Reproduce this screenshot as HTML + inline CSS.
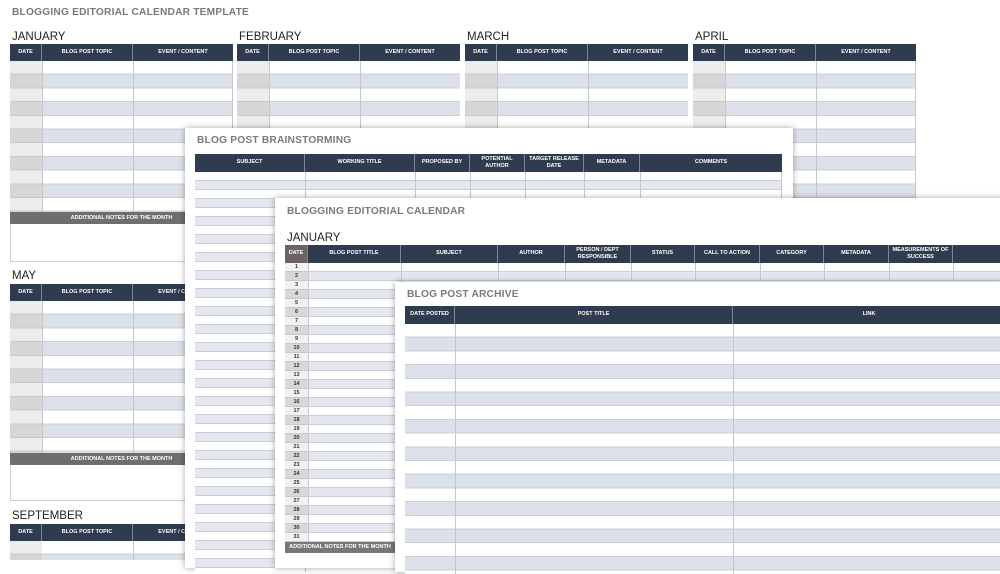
<!DOCTYPE html>
<html><head><meta charset="utf-8"><style>
*{margin:0;padding:0;box-sizing:border-box}
body{width:1000px;height:560px;overflow:hidden;background:#fff;position:relative;font-family:"Liberation Sans",sans-serif}
.a{position:absolute}
.ttl{position:absolute;color:#7a7a7a;font-weight:bold;font-size:10.2px;letter-spacing:.2px}
.mon{position:absolute;color:#222;font-size:11.5px}
.hd{position:absolute;background:#2f3b4e;display:flex;color:#fff;font-weight:bold;font-size:5.5px;text-align:center;align-items:stretch}
.hd div{display:flex;align-items:center;justify-content:center;border-right:1px solid #7d8797;line-height:1.35}
.hd div:last-child{border-right:none}
.rows{position:absolute;background:repeating-linear-gradient(#fff 0 12.7px,#c9ced6 12.7px 13.7px,#dce1e9 13.7px 26.4px,#c9ced6 26.4px 27.4px)}
.dc{position:absolute;background:repeating-linear-gradient(#ececec 0 12.7px,#c9c9c9 12.7px 13.7px,#d6d6d6 13.7px 26.4px,#c9c9c9 26.4px 27.4px)}
.vl{position:absolute;width:1px;background:#c4c8ce}
.nb{position:absolute;background:#6e6e6e;color:#fff;font-weight:bold;font-size:5.5px;text-align:center;line-height:12px}
.nbox{position:absolute;border:1px solid #d0d0d0;border-top:none}
.sheet{position:absolute;background:#fff;box-shadow:0 0 6px rgba(0,0,0,.35)}
.r9{position:absolute;background:repeating-linear-gradient(#fff 0 8px,#c9ced6 8px 9px,#e4e8ee 9px 17px,#c9ced6 17px 18px)}
.d9{position:absolute;background:repeating-linear-gradient(#f1f1f1 0 8px,#c9c9c9 8px 9px,#d8d8d8 9px 17px,#c9c9c9 17px 18px);font-size:5.5px;font-weight:bold;color:#333;text-align:center}
.d9 div{height:9px;line-height:9px}
</style></head><body>

<div class="ttl" style="left:12px;top:7px">BLOGGING EDITORIAL CALENDAR TEMPLATE</div>

<!-- Month tables -->
<div class="mon" style="left:12px;top:31px">JANUARY</div>
<div class="mon" style="left:239px;top:31px">FEBRUARY</div>
<div class="mon" style="left:467px;top:31px">MARCH</div>
<div class="mon" style="left:695px;top:31px">APRIL</div>

<div class="hd" style="left:10px;top:44px;width:223px;height:17px"><div style="width:32px">DATE</div><div style="width:91px">BLOG POST TOPIC</div><div style="flex:1">EVENT / CONTENT</div></div>
<div class="rows" style="left:10px;top:61px;width:223px;height:151px"></div><div class="dc" style="left:10px;top:61px;width:32px;height:151px"></div>
<div class="vl" style="left:133px;top:61px;height:151px"></div><div class="vl" style="left:232px;top:61px;height:151px"></div><div class="vl" style="left:42px;top:61px;height:151px"></div>
<div class="nb" style="left:10px;top:212px;width:223px;height:12px">ADDITIONAL NOTES FOR THE MONTH</div>
<div class="nbox" style="left:10px;top:224px;width:223px;height:38px"></div>

<div class="hd" style="left:237px;top:44px;width:223px;height:17px"><div style="width:32px">DATE</div><div style="width:91px">BLOG POST TOPIC</div><div style="flex:1">EVENT / CONTENT</div></div>
<div class="rows" style="left:237px;top:61px;width:223px;height:80px"></div><div class="dc" style="left:237px;top:61px;width:32px;height:80px"></div>
<div class="vl" style="left:360px;top:61px;height:80px"></div><div class="vl" style="left:269px;top:61px;height:80px"></div>

<div class="hd" style="left:465px;top:44px;width:223px;height:17px"><div style="width:32px">DATE</div><div style="width:91px">BLOG POST TOPIC</div><div style="flex:1">EVENT / CONTENT</div></div>
<div class="rows" style="left:465px;top:61px;width:223px;height:80px"></div><div class="dc" style="left:465px;top:61px;width:32px;height:80px"></div>
<div class="vl" style="left:588px;top:61px;height:80px"></div><div class="vl" style="left:497px;top:61px;height:80px"></div>

<div class="hd" style="left:693px;top:44px;width:223px;height:17px"><div style="width:32px">DATE</div><div style="width:91px">BLOG POST TOPIC</div><div style="flex:1">EVENT / CONTENT</div></div>
<div class="rows" style="left:693px;top:61px;width:223px;height:137px"></div><div class="dc" style="left:693px;top:61px;width:32px;height:137px"></div>
<div class="vl" style="left:816px;top:61px;height:137px"></div><div class="vl" style="left:725px;top:61px;height:137px"></div><div class="vl" style="left:915px;top:61px;height:137px"></div>

<div class="mon" style="left:12px;top:270px">MAY</div>
<div class="hd" style="left:10px;top:284px;width:223px;height:17px"><div style="width:32px">DATE</div><div style="width:91px">BLOG POST TOPIC</div><div style="flex:1">EVENT / CONTENT</div></div>
<div class="rows" style="left:10px;top:301px;width:223px;height:152px"></div><div class="dc" style="left:10px;top:301px;width:32px;height:152px"></div>
<div class="vl" style="left:133px;top:301px;height:152px"></div><div class="vl" style="left:42px;top:301px;height:152px"></div>
<div class="nb" style="left:10px;top:453px;width:223px;height:12px">ADDITIONAL NOTES FOR THE MONTH</div>
<div class="nbox" style="left:10px;top:465px;width:223px;height:36px"></div>

<div class="mon" style="left:12px;top:510px">SEPTEMBER</div>
<div class="hd" style="left:10px;top:524px;width:223px;height:17px"><div style="width:32px">DATE</div><div style="width:91px">BLOG POST TOPIC</div><div style="flex:1">EVENT / CONTENT</div></div>
<div class="rows" style="left:10px;top:541px;width:223px;height:19px"></div><div class="dc" style="left:10px;top:541px;width:32px;height:19px"></div>
<div class="vl" style="left:133px;top:541px;height:19px"></div>

<!-- Brainstorming sheet -->
<div class="sheet" style="left:185px;top:128px;width:608px;height:440px">
  <div class="ttl" style="left:12px;top:7px">BLOG POST BRAINSTORMING</div>
  <div class="hd" style="left:10px;top:26px;width:587px;height:18px"><div style="width:110px">SUBJECT</div><div style="width:110px">WORKING TITLE</div><div style="width:55px">PROPOSED BY</div><div style="width:55px">POTENTIAL<br>AUTHOR</div><div style="width:59px">TARGET RELEASE<br>DATE</div><div style="width:56px">METADATA</div><div style="flex:1">COMMENTS</div></div>
  <div class="r9" style="left:10px;top:44px;width:587px;height:400px"></div>
  <div class="vl" style="left:120px;top:44px;height:400px"></div><div class="vl" style="left:230px;top:44px;height:30px"></div><div class="vl" style="left:285px;top:44px;height:30px"></div><div class="vl" style="left:340px;top:44px;height:30px"></div><div class="vl" style="left:399px;top:44px;height:30px"></div><div class="vl" style="left:455px;top:44px;height:30px"></div><div class="vl" style="left:596px;top:44px;height:30px"></div>
</div>

<!-- Editorial calendar sheet -->
<div class="sheet" style="left:275px;top:198px;width:730px;height:370px">
  <div class="ttl" style="left:12px;top:8px">BLOGGING EDITORIAL CALENDAR</div>
  <div class="mon" style="left:12px;top:34px">JANUARY</div>
  <div class="hd" style="left:10px;top:47px;width:720px;height:18px"><div style="width:23px;background:#6b6464">DATE</div><div style="width:93px">BLOG POST TITLE</div><div style="width:97px">SUBJECT</div><div style="width:67px">AUTHOR</div><div style="width:66px">PERSON / DEPT<br>RESPONSIBLE</div><div style="width:64px">STATUS</div><div style="width:65px">CALL TO ACTION</div><div style="width:64px">CATEGORY</div><div style="width:65px">METADATA</div><div style="width:64px">MEASUREMENTS OF<br>SUCCESS</div><div style="flex:1"></div></div>
  <div class="r9" style="left:10px;top:65px;width:720px;height:279px"></div>
  <div class="d9" style="left:10px;top:65px;width:23px;height:279px">
    <div>1</div><div>2</div><div>3</div><div>4</div><div>5</div><div>6</div><div>7</div><div>8</div><div>9</div><div>10</div><div>11</div><div>12</div><div>13</div><div>14</div><div>15</div><div>16</div><div>17</div><div>18</div><div>19</div><div>20</div><div>21</div><div>22</div><div>23</div><div>24</div><div>25</div><div>26</div><div>27</div><div>28</div><div>29</div><div>30</div><div>31</div>
  </div>
  <div class="vl" style="left:33px;top:65px;height:279px"></div><div class="vl" style="left:126px;top:65px;height:279px"></div>
  <div class="vl" style="left:223px;top:65px;height:18px"></div><div class="vl" style="left:290px;top:65px;height:18px"></div><div class="vl" style="left:356px;top:65px;height:18px"></div><div class="vl" style="left:420px;top:65px;height:18px"></div><div class="vl" style="left:485px;top:65px;height:18px"></div><div class="vl" style="left:549px;top:65px;height:18px"></div><div class="vl" style="left:614px;top:65px;height:18px"></div><div class="vl" style="left:678px;top:65px;height:18px"></div>
  <div class="nb" style="left:10px;top:344px;width:110px;height:11px;line-height:11px;background:#777">ADDITIONAL NOTES FOR THE MONTH</div>
</div>

<!-- Archive sheet -->
<div class="sheet" style="left:395px;top:282px;width:610px;height:290px">
  <div class="ttl" style="left:12px;top:7px">BLOG POST ARCHIVE</div>
  <div class="hd" style="left:10px;top:24px;width:600px;height:18px"><div style="width:50px">DATE POSTED</div><div style="width:278px">POST TITLE</div><div style="flex:1">LINK</div></div>
  <div class="rows" style="left:10px;top:42px;width:600px;height:250px"></div>
  <div class="vl" style="left:60px;top:42px;height:250px"></div><div class="vl" style="left:338px;top:42px;height:250px"></div>
</div>

</body></html>
